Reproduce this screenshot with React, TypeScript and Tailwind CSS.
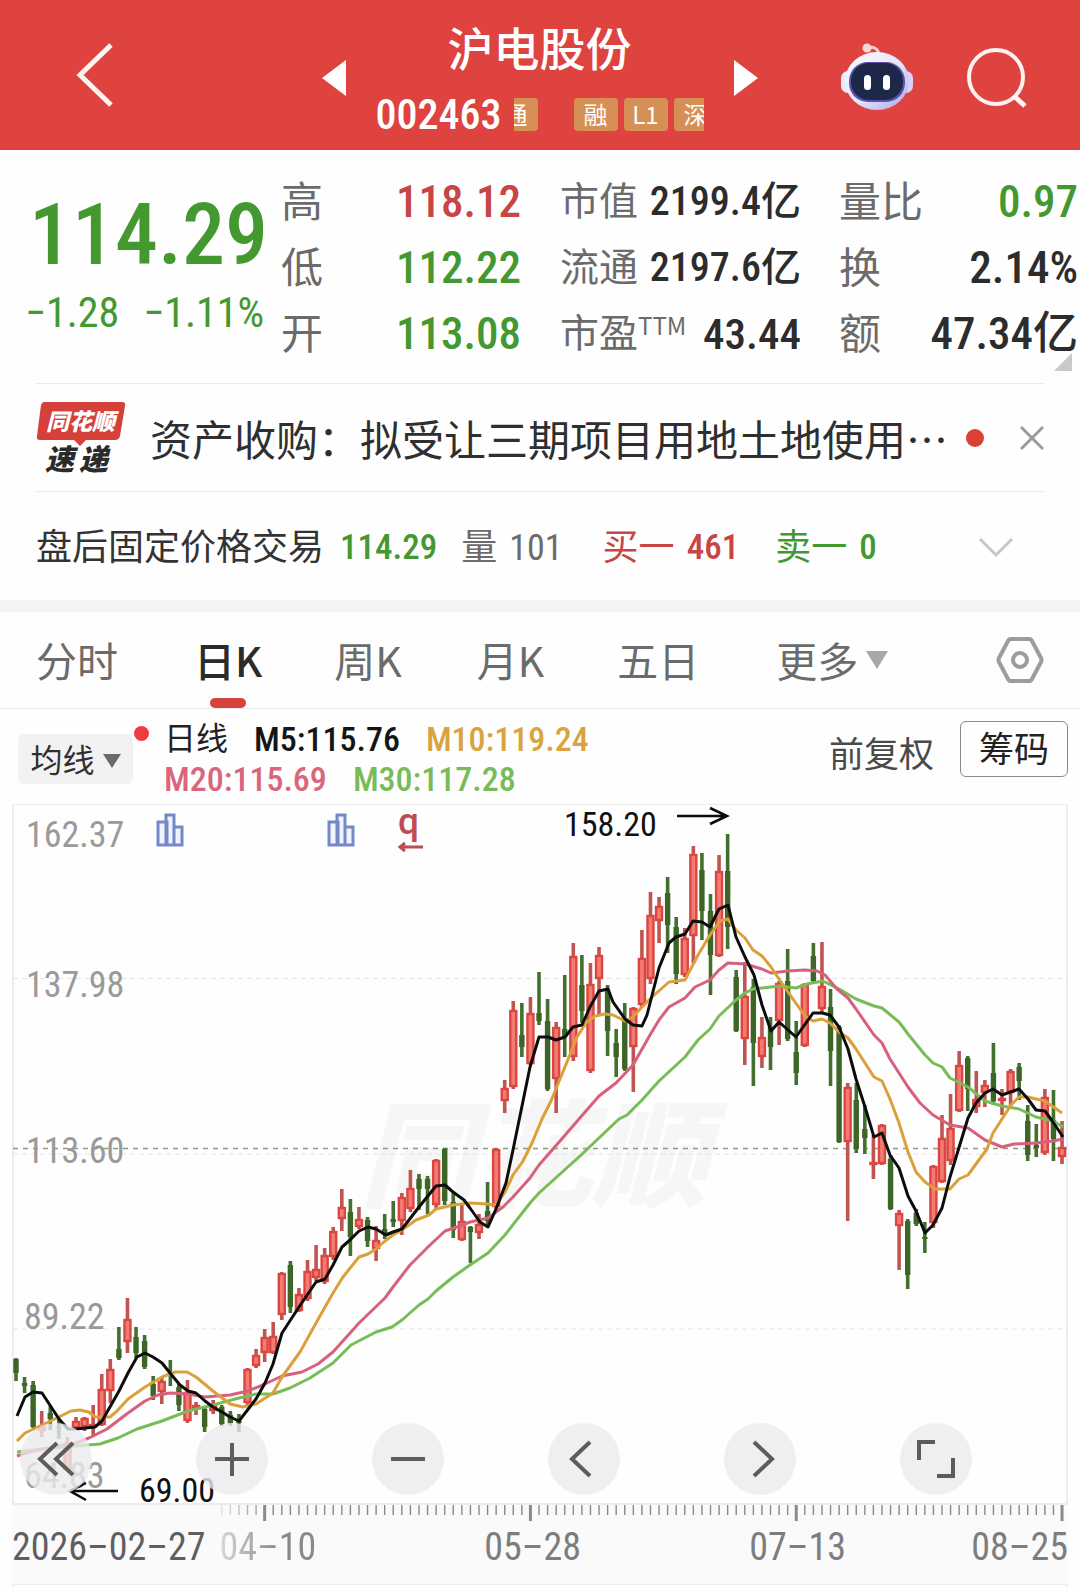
import { ReactNode } from "react";

type Candle = [kind: "r" | "g", high: number, top: number, bottom: number, low: number];

const candles: Candle[] = [
    ["g", 1358, 1359, 1373, 1381], ["g", 1377, 1383, 1386, 1393], ["g", 1381, 1385, 1427, 1428], ["r", 1411, 1426, 1431, 1437],
    ["g", 1406, 1413, 1419, 1430], ["g", 1419, 1427, 1428, 1439], ["r", 1437, 1443, 1470, 1471], ["r", 1417, 1421, 1428, 1429],
    ["r", 1417, 1418, 1427, 1431], ["r", 1405, 1424, 1426, 1435], ["r", 1374, 1389, 1425, 1426], ["r", 1359, 1369, 1391, 1403],
    ["g", 1327, 1349, 1358, 1360], ["r", 1298, 1319, 1342, 1353], ["g", 1327, 1337, 1353, 1358], ["g", 1335, 1341, 1367, 1369],
    ["g", 1376, 1384, 1396, 1400], ["r", 1377, 1381, 1392, 1404], ["g", 1360, 1373, 1375, 1386], ["g", 1384, 1387, 1405, 1411],
    ["r", 1380, 1392, 1421, 1423], ["r", 1402, 1405, 1409, 1415], ["g", 1407, 1409, 1427, 1432], ["r", 1400, 1404, 1411, 1414],
    ["g", 1405, 1407, 1424, 1426], ["g", 1411, 1415, 1423, 1426], ["g", 1414, 1421, 1423, 1432], ["r", 1368, 1369, 1403, 1406],
    ["r", 1349, 1355, 1366, 1368], ["r", 1329, 1337, 1353, 1362], ["r", 1322, 1336, 1353, 1354], ["r", 1272, 1273, 1315, 1320],
    ["g", 1261, 1265, 1307, 1313], ["r", 1288, 1294, 1311, 1312], ["r", 1260, 1271, 1299, 1301], ["r", 1245, 1269, 1278, 1281],
    ["r", 1248, 1255, 1282, 1284], ["r", 1227, 1231, 1257, 1260], ["r", 1189, 1207, 1219, 1231], ["g", 1199, 1212, 1237, 1256],
    ["r", 1207, 1219, 1227, 1229], ["g", 1217, 1220, 1241, 1247], ["r", 1226, 1240, 1249, 1261], ["g", 1214, 1229, 1235, 1239],
    ["g", 1201, 1219, 1222, 1227], ["r", 1193, 1197, 1221, 1235], ["r", 1170, 1188, 1209, 1212], ["g", 1174, 1179, 1189, 1210],
    ["g", 1176, 1179, 1189, 1214], ["r", 1159, 1160, 1205, 1209], ["g", 1148, 1149, 1201, 1205], ["g", 1193, 1202, 1230, 1238],
    ["r", 1205, 1221, 1240, 1241], ["g", 1226, 1227, 1232, 1263], ["r", 1214, 1224, 1233, 1239], ["g", 1182, 1211, 1221, 1225],
    ["r", 1148, 1149, 1207, 1209], ["r", 1080, 1088, 1101, 1113], ["r", 1001, 1010, 1087, 1089], ["g", 1003, 1035, 1047, 1057],
    ["r", 997, 1013, 1064, 1065], ["g", 972, 1013, 1021, 1025], ["g", 999, 1021, 1089, 1091], ["r", 1022, 1027, 1079, 1113],
    ["g", 975, 1029, 1037, 1057], ["r", 943, 956, 1057, 1061], ["g", 955, 985, 1011, 1023], ["r", 963, 984, 1071, 1073],
    ["r", 947, 955, 979, 1016], ["g", 985, 990, 1031, 1056], ["g", 1029, 1043, 1057, 1077], ["g", 1003, 1020, 1069, 1071],
    ["r", 1007, 1008, 1047, 1092], ["r", 930, 958, 1005, 1007], ["r", 892, 915, 979, 984], ["r", 897, 906, 921, 943],
    ["g", 877, 893, 925, 953], ["g", 917, 927, 974, 984], ["r", 928, 938, 975, 977], ["r", 846, 854, 936, 963],
    ["g", 853, 870, 911, 940], ["g", 894, 911, 955, 995], ["r", 855, 871, 956, 957], ["g", 834, 871, 927, 949],
    ["g", 970, 977, 1031, 1032], ["r", 962, 996, 1039, 1065], ["g", 979, 987, 1043, 1086], ["r", 1017, 1037, 1057, 1068],
    ["g", 1017, 1027, 1047, 1070], ["r", 981, 983, 1021, 1045], ["g", 949, 981, 1039, 1041], ["g", 1021, 1052, 1073, 1085],
    ["r", 983, 984, 1046, 1047], ["g", 943, 956, 981, 983], ["r", 942, 986, 1009, 1013], ["g", 989, 1007, 1051, 1086],
    ["g", 1025, 1027, 1142, 1143], ["r", 1083, 1087, 1142, 1221], ["g", 1083, 1100, 1149, 1153], ["g", 1105, 1129, 1138, 1154],
    ["r", 1135, 1162, 1165, 1179], ["r", 1124, 1125, 1164, 1165], ["g", 1155, 1159, 1209, 1210], ["r", 1210, 1213, 1226, 1270],
    ["g", 1219, 1221, 1275, 1289], ["g", 1209, 1213, 1224, 1226], ["g", 1222, 1237, 1239, 1253], ["r", 1165, 1166, 1223, 1228],
    ["r", 1115, 1138, 1182, 1183], ["r", 1094, 1128, 1161, 1165], ["r", 1051, 1065, 1111, 1112], ["g", 1056, 1058, 1089, 1111],
    ["r", 1071, 1099, 1107, 1113], ["r", 1080, 1085, 1093, 1107], ["g", 1043, 1073, 1101, 1105], ["r", 1089, 1098, 1101, 1115],
    ["r", 1069, 1071, 1093, 1105], ["g", 1063, 1067, 1081, 1100], ["g", 1105, 1121, 1155, 1161], ["g", 1124, 1145, 1148, 1157],
    ["r", 1089, 1097, 1153, 1155], ["g", 1090, 1120, 1139, 1161], ["r", 1121, 1147, 1157, 1164],
];

const averages = [
    {
        color: "#76bd58",
        points: "17,1452 42,1449 76,1446 100,1444 118,1438 137,1429 162,1421 188,1411 213,1405 239,1398 256,1394 273,1394 290,1388 310,1378 333,1363 351,1345 376,1332 392,1327 402,1320 419,1305 428,1299 436,1291 453,1277 470,1265 488,1253 505,1235 530,1203 539,1193 580,1156 619,1119 627,1115 642,1100 659,1081 685,1057 698,1040 710,1029 719,1016 736,1000 745,993 753,989 771,987 779,986 796,988 807,984 823,981 839,989 856,999 874,1006 882,1008 899,1022 908,1034 925,1055 933,1063 942,1067 950,1078 968,1087 985,1101 1002,1106 1019,1109 1036,1117 1053,1121 1063,1127",
    },
    {
        color: "#d7617d",
        points: "17,1456 33,1451 59,1446 76,1443 89,1438 107,1429 128,1413 145,1401 158,1395 170,1393 188,1394 205,1397 230,1395 248,1391 265,1384 282,1376 302,1372 318,1364 333,1352 351,1332 359,1323 385,1298 393,1287 410,1265 429,1246 445,1231 460,1226 470,1222 488,1218 503,1207 513,1197 530,1178 539,1165 560,1141 579,1119 599,1096 616,1083 633,1065 650,1035 659,1020 669,1007 685,998 695,987 710,980 719,970 728,963 745,964 762,969 771,973 788,971 805,970 817,971 825,975 837,989 848,998 856,1009 874,1035 882,1043 890,1059 908,1087 920,1103 933,1115 950,1125 968,1128 985,1140 1002,1147 1014,1144 1036,1143 1053,1141 1063,1139",
    },
    {
        color: "#dba03a",
        points: "17,1441 25,1433 42,1425 59,1417 71,1411 80,1410 89,1412 95,1417 110,1417 117,1411 128,1399 145,1387 162,1377 175,1372 187,1372 196,1377 213,1391 230,1404 243,1407 256,1404 273,1393 282,1377 300,1352 316,1323 333,1293 343,1277 359,1257 368,1254 376,1249 385,1241 393,1235 402,1230 416,1220 429,1215 436,1209 453,1205 470,1203 487,1204 496,1205 505,1192 513,1175 523,1161 532,1143 542,1119 551,1101 560,1079 569,1057 577,1037 586,1023 595,1016 605,1014 613,1015 625,1021 633,1017 642,1007 652,997 669,982 685,980 698,955 710,935 720,921 728,919 736,930 745,938 753,950 762,956 771,967 779,979 788,992 805,1016 813,1021 822,1019 830,1023 839,1032 848,1038 856,1049 865,1063 874,1077 882,1081 890,1099 899,1123 908,1152 916,1172 925,1182 935,1189 950,1189 959,1179 968,1175 976,1164 987,1149 993,1133 1011,1105 1019,1097 1028,1097 1036,1099 1045,1101 1062,1113",
    },
    {
        color: "#0d0d0d",
        points: "17,1416 25,1397 33,1392 42,1393 59,1419 68,1429 76,1429 95,1427 102,1421 119,1391 128,1373 137,1357 145,1353 153,1357 162,1363 170,1373 180,1385 188,1391 196,1393 205,1401 213,1407 222,1412 230,1417 239,1421 256,1399 265,1383 273,1364 282,1333 299,1307 316,1282 325,1279 333,1265 342,1247 350,1240 359,1231 368,1227 376,1229 386,1235 393,1232 402,1229 419,1207 436,1186 445,1185 453,1192 464,1200 470,1208 480,1222 488,1227 496,1209 506,1183 513,1150 530,1067 539,1037 548,1037 556,1040 565,1037 573,1027 582,1025 590,1007 599,991 608,989 613,1002 625,1019 633,1025 642,1026 647,1015 659,968 669,943 676,937 685,934 693,921 702,922 710,927 719,909 728,905 736,937 745,957 754,975 762,1005 771,1031 779,1022 796,1037 813,1013 822,1013 830,1015 839,1027 848,1049 856,1079 865,1107 874,1137 882,1133 890,1155 899,1168 908,1196 916,1211 925,1233 933,1225 942,1208 950,1177 968,1118 976,1103 985,1093 993,1089 1002,1095 1019,1089 1028,1099 1036,1110 1045,1111 1053,1122 1063,1137",
    },
];

// x of the n-th trading day on the chart
const dayX = (i: number) => 16 + i * 8.574;

function Tag({ children }: { children: ReactNode }) {
    return (
        <span className="flex h-[33px] w-11 shrink-0 items-center justify-center rounded-sm bg-[#d69055] font-[Noto_Sans_CJK_SC] text-2xl leading-8">
            {children}
        </span>
    );
}

function Header() {
    return (
        <header className="flex h-[150px] items-center bg-[#de4340] text-white">
            <div className="flex-1 pr-[6px] pl-[76px]">
                <button aria-label="返回" className="block">
                    <svg width="40" height="68" viewBox="0 0 40 68" fill="none" stroke="#fff4f0" strokeWidth="5">
                        <path d="M35 4 4 34l31 30" />
                    </svg>
                </button>
            </div>
            <div className="flex w-[436px] items-center justify-between pt-[6px]">
                <button aria-label="上一只">
                    <svg width="24" height="36" viewBox="0 0 24 36" fill="#fff"><path d="M24 0v36L0 18z" /></svg>
                </button>
                <div className="flex flex-col items-center pt-1">
                    <h1 className="text-[46px] leading-[68px] font-medium">沪电股份</h1>
                    <div className="flex h-[60px] items-center">
                        <span className="text-[42px] font-medium">002463</span>
                        <div className="ml-3 flex w-[190px] overflow-hidden">
                            <div className="mr-9 flex w-6 shrink-0 justify-end overflow-hidden"><Tag>通</Tag></div>
                            <div className="flex shrink-0 gap-[6px]">
                                <Tag>融</Tag>
                                <Tag>L1</Tag>
                                <Tag>深</Tag>
                            </div>
                        </div>
                    </div>
                </div>
                <button aria-label="下一只">
                    <svg width="24" height="36" viewBox="0 0 24 36" fill="#fff"><path d="M0 0v36l24-18z" /></svg>
                </button>
            </div>
            <div className="flex flex-1 items-center gap-[52px] pt-1 pl-[83px]">
                <button aria-label="智能助手">
                    <svg width="72" height="68" viewBox="0 0 72 68">
                        <defs>
                            <linearGradient id="shell" x1="0" y1="0" x2="1" y2="1">
                                <stop offset="0" stopColor="#ffffff" />
                                <stop offset="0.55" stopColor="#e3e2fa" />
                                <stop offset="1" stopColor="#a9a2ec" />
                            </linearGradient>
                        </defs>
                        <path d="M27 5c6-2 11 1 11 8" fill="none" stroke="#f6cfd2" strokeWidth="3" />
                        <circle cx="26" cy="5" r="4.500" fill="#f8d5d5" />
                        <rect x="0" y="28" width="14" height="22" rx="7" fill="#e9ecfb" />
                        <rect x="58" y="28" width="14" height="22" rx="7" fill="#d9d2f6" />
                        <ellipse cx="36" cy="38" rx="32" ry="29" fill="url(#shell)" />
                        <rect x="8" y="19" width="56" height="40" rx="19" fill="#5a50a8" />
                        <rect x="10" y="20" width="52" height="37" rx="18" fill="#1d2748" />
                        <rect x="23" y="32" width="7" height="15" rx="3.500" fill="#fff" />
                        <rect x="42" y="32" width="7" height="15" rx="3.500" fill="#fff" />
                    </svg>
                </button>
                <button aria-label="搜索">
                    <svg width="64" height="64" viewBox="0 0 64 64" fill="none" stroke="#fff1ee" strokeWidth="4">
                        <circle cx="31" cy="32" r="27" />
                        <path d="M49 51l11 10" strokeWidth="5" />
                    </svg>
                </button>
            </div>
        </header>
    );
}

type StatProps = { label: ReactNode; value: string; className: string };

function Stat({ label, value, className }: StatProps) {
    return (
        <div className="flex h-[66px] items-center justify-between whitespace-nowrap">
            <dt className="text-[#6b6b6b]">{label}</dt>
            <dd className={`font-medium ${className}`}>{value}</dd>
        </div>
    );
}

function Quote() {
    return (
        <section className="relative grid grid-cols-[281fr_279fr_279fr_241fr] pt-[19px] pb-4 text-[42px]">
            <div className="flex flex-col items-center pt-4 text-[#43982f]">
                <p className="ml-4 text-[86px] leading-[100px] font-medium">114.29</p>
                <p className="ml-2 flex gap-6 text-[42px] leading-[56px] whitespace-nowrap">
                    <span>−1.28</span>
                    <span>−1.11%</span>
                </p>
            </div>
            <dl className="pr-[39px]">
                <Stat label="高" value="118.12" className="text-[45px] text-[#c64545]" />
                <Stat label="低" value="112.22" className="text-[45px] text-[#43982f]" />
                <Stat label="开" value="113.08" className="text-[45px] text-[#43982f]" />
            </dl>
            <dl className="pr-[38px] text-[39px]">
                <Stat label="市值" value="2199.4亿" className="text-[40px] text-[#2c2c2c]" />
                <Stat label="流通" value="2197.6亿" className="text-[40px] text-[#2c2c2c]" />
                <Stat
                    label={<>市盈<sup className="font-[Noto_Sans_CJK_SC] text-2xl">TTM</sup></>}
                    value="43.44"
                    className="text-[43px] text-[#2c2c2c]"
                />
            </dl>
            <dl className="pr-[2px]">
                <Stat label="量比" value="0.97" className="text-[45px] text-[#43982f]" />
                <Stat label="换" value="2.14%" className="text-[45px] text-[#2c2c2c]" />
                <Stat label="额" value="47.34亿" className="text-[45px] text-[#2c2c2c]" />
            </dl>
            <svg className="absolute right-2 bottom-3" width="18" height="18" viewBox="0 0 18 18" fill="#c9c9c9">
                <path d="M18 0v18H0z" />
            </svg>
        </section>
    );
}

function News() {
    return (
        <section className="mx-9 flex h-[109px] items-center border-y border-[#ececec]">
            <svg width="90" height="80" viewBox="0 -2 90 80" className="shrink-0">
                <path d="M8 2h78q4 0 3 4l-5 30q-1 4-5 4H50l-6 6-6-6H4q-4 0-3-4L5 5q1-3 3-3z" fill="#d5413a" />
                <text x="10" y="30" className="fill-white text-[23px] font-black italic">同花顺</text>
                <text x="9" y="70" className="fill-[#2b2b2b] text-[29px] font-black italic">速</text>
                <text x="43" y="70" className="fill-[#2b2b2b] text-[29px] font-black italic">递</text>
            </svg>
            <a href="#news" className="ml-6 pt-1 text-[42px] whitespace-nowrap text-[#2f2f2f]">
                资产收购：拟受让三期项目用地土地使用<span className='font-["Noto_Sans_CJK_SC"]'>…</span>
            </a>
            <span className="ml-auto size-[18px] shrink-0 rounded-full bg-[#dc4034]" />
            <button aria-label="关闭" className="ml-9 shrink-0">
                <svg width="24" height="26" viewBox="0 0 24 26" fill="none" stroke="#9a9a9a" strokeWidth="3">
                    <path d="M1 2l22 22M23 2 1 24" />
                </svg>
            </button>
        </section>
    );
}

function AfterHours() {
    return (
        <section className="flex h-[108px] items-center pt-1 pr-[66px] pl-9 text-4xl whitespace-nowrap">
            <span className="text-[#333]">盘后固定价格交易</span>
            <span className="ml-4 text-[35px] font-medium text-[#43982f]">114.29</span>
            <span className="ml-6 text-[#6b6b6b]">量</span>
            <span className="ml-3 text-[#6b6b6b]">101</span>
            <span className="ml-10 text-[#c64545]">买一</span>
            <span className="ml-3 text-[35px] font-medium text-[#c64545]">461</span>
            <span className="ml-9 text-[#43982f]">卖一</span>
            <span className="ml-3 text-[35px] font-medium text-[#43982f]">0</span>
            <button aria-label="展开" className="ml-auto">
                <svg width="36" height="22" viewBox="0 0 36 22" fill="none" stroke="#c6c6c6" strokeWidth="3">
                    <path d="M2 2l16 16L34 2" />
                </svg>
            </button>
        </section>
    );
}

function Tabs() {
    return (
        <nav className="flex h-[97px] items-stretch border-b border-[#ececec] px-9 font-[Noto_Sans_CJK_SC] text-[41px] text-[#6b6b6b]">
            <button>分时</button>
            <button className="relative ml-[76px] font-medium text-[#2b2b2b]">
                日K
                <span className="absolute bottom-0 left-1/2 h-[10px] w-9 -translate-x-1/2 rounded-full bg-[#d4433b]" />
            </button>
            <button className="ml-[72px]">周K</button>
            <button className="ml-[75px]">月K</button>
            <button className="ml-[73px]">五日</button>
            <button className="ml-[77px] flex items-center gap-2">
                更多
                <svg width="22" height="18" viewBox="0 0 22 18" fill="#a8a8a8"><path d="M0 0h22L11 18z" /></svg>
            </button>
            <button aria-label="设置" className="ml-auto">
                <svg width="48" height="48" viewBox="0 0 48 48" fill="none" stroke="#9c9c9c" strokeWidth="4">
                    <path d="M15 3h18q2 0 3 2l9 17q1 2 0 4l-9 17q-1 2-3 2H15q-2 0-3-2L3 26q-1-2 0-4l9-17q1-2 3-2z" />
                    <circle cx="24" cy="24" r="7" />
                </svg>
            </button>
        </nav>
    );
}

function AverageBar() {
    return (
        <section className="flex h-[95px] items-center pr-3 pl-[18px] text-[32px] whitespace-nowrap">
            <button className="relative mt-1 flex h-[50px] w-[115px] items-center justify-center gap-2 rounded-md bg-[#f2f2f2] pt-1 text-[#2f2f2f]">
                均线
                <svg width="18" height="14" viewBox="0 0 18 14" fill="#6a6a6a"><path d="M0 0h18L9 14z" /></svg>
                <span className="absolute -top-2 -right-4 size-[15px] rounded-full bg-[#ee3b43]" />
            </button>
            <div className="ml-[31px] pt-1 text-[34px] leading-10 font-medium">
                <p className="flex gap-[26px]">
                    <span className="text-[32px] font-normal text-[#222]">日线</span>
                    <span className="text-[#151515]">M5:115.76</span>
                    <span className="text-[#d9a43e]">M10:119.24</span>
                </p>
                <p className="flex gap-[26px]">
                    <span className="text-[#d9667d]">M20:115.69</span>
                    <span className="text-[#78bb58]">M30:117.28</span>
                </p>
            </div>
            <button className="ml-auto text-[35px] text-[#4a4a4a]">前复权</button>
            <button className="mb-4 ml-[26px] h-14 w-[108px] rounded-md border border-[#8a8a8a] pt-1 text-[35px] leading-[48px] text-[#222]">
                筹码
            </button>
        </section>
    );
}

function Chart() {
    return (
        <svg viewBox="12 804 1056 701" className="block w-full">
            <rect x="13" y="804" width="1054" height="700" fill="#fefefe" stroke="#e6e6e6" strokeWidth="1.500" />
            <text x="360" y="1198" className="fill-[#f6f6f6] text-[116px] font-black italic">同花顺</text>
            <path d="M13 978.500H1067M13 1154H1067M13 1329H1067" stroke="#e4e4e4" strokeDasharray="5 4" />
            <path d="M13 1148.500H1067" stroke="#8d9a80" strokeWidth="1.500" strokeDasharray="5 5" />
            <g className="fill-[#9a9a9a] text-[36px]">
                <text x="26" y="847">162.37</text>
                <text x="26" y="997">137.98</text>
                <text x="26" y="1163">113.60</text>
                <text x="24" y="1329">89.22</text>
                <text x="24" y="1488">64.83</text>
            </g>

            {candles.map(([kind, high, top, bottom, low], i) => (
                <g key={i}>
                    <rect x={dayX(i) - 1.8} y={high} width="3.600" height={low - high} fill={kind === "r" ? "#bf5451" : "#44702f"} />
                    {kind === "r" ? (
                        <rect x={dayX(i) - 3} y={top + 1} width="6" height={Math.max(bottom - top - 2, 1)} fill="#f27c73" stroke="#dd4540" strokeWidth="2.400" />
                    ) : (
                        <rect x={dayX(i) - 2.700} y={top} width="5.400" height={bottom - top} fill="#3d6526" />
                    )}
                </g>
            ))}
            {averages.map((line) => (
                <polyline key={line.color} points={line.points} fill="none" stroke={line.color} strokeWidth="3" strokeLinejoin="round" />
            ))}

            {/* report and dividend marks */}
            {[157, 328].map((x) => (
                <path key={x} d={`M${x + 1} 822h9v23h-9zM${x + 9} 815h8v30h-8zM${x + 17} 827h8v18h-8z`} fill="#eef3ff" stroke="#7488c6" strokeWidth="3" />
            ))}
            <text x="398" y="834" className="fill-[#bd4c55] font-[Roboto] text-[37px] font-medium">q</text>
            <path d="M423 847H401M405 843l-5 4 5 4" fill="none" stroke="#bd4c55" strokeWidth="3" />

            <g className="fill-[#111] text-[34px]">
                <text x="564" y="836">158.20</text>
                <text x="139" y="1502">69.00</text>
            </g>
            <path d="M677 816h50M710 808l17 8-17 8M118 1491H70M86 1483l-16 8 16 9" fill="none" stroke="#0a0a0a" strokeWidth="2.500" />
        </svg>
    );
}

function RoundButton({ label, d }: { label: string; d: string }) {
    return (
        <button aria-label={label} className="size-[72px] rounded-full bg-[#ebebed]/80">
            <svg viewBox="0 0 72 72" fill="none" stroke="#5c5c5c" strokeWidth="4"><path d={d} /></svg>
        </button>
    );
}

function TimeAxis() {
    return (
        <footer className="mx-3 bg-[#fafafa] text-[38px] text-[#7d7d7d]">
            <svg viewBox="12 0 1056 18" className="block w-full">
                {candles.map((_, i) => {
                    if (i < 24) return null;
                    const major = (i - 29) % 31 === 0;
                    return (
                        <rect
                            key={i}
                            x={dayX(i) - (major ? 1.5 : 0.7)}
                            y="0"
                            width={major ? 3 : 1.4}
                            height={major ? 16 : 10}
                            fill="#8a8a8a"
                            opacity={i < 29 ? (i - 22) / 8 : 1}
                        />
                    );
                })}
            </svg>
            <div className="flex h-[61px] items-start leading-[48px]">
                <span className="text-[#5f5f5f]">2026–02–27</span>
                <span className="ml-[14px] bg-linear-to-r from-[#d8d8d8] to-[#8a8a8a] to-60% bg-clip-text text-transparent">04–10</span>
                <span className="ml-[168px]">05–28</span>
                <span className="ml-[168px]">07–13</span>
                <span className="ml-auto">08–25</span>
            </div>
        </footer>
    );
}

export default function App() {
    return (
        <main className={`min-h-screen bg-[#fefefe] font-[Roboto_Condensed,"Liberation_Sans_Narrow",Roboto,"Noto_Sans_CJK_SC",sans-serif]`}>
            <Header />
            <Quote />
            <News />
            <AfterHours />
            <div className="h-3 bg-[#f3f3f3]" />
            <Tabs />
            <AverageBar />
            <div className="relative mx-3">
                <Chart />
                <div className="absolute inset-x-2 bottom-[10px] flex justify-between pr-[88px]">
                    <RoundButton label="回到最早" d="M37 20 20 36l17 16M53 20 36 36l17 16" />
                    <RoundButton label="放大" d="M36 20v33M19 36h34" />
                    <RoundButton label="缩小" d="M19 36h34" />
                    <RoundButton label="向左" d="M42 19 24 36l18 17" />
                    <RoundButton label="向右" d="M30 19l18 17-18 17" />
                    <RoundButton label="全屏" d="M19 37V19h16M53 35v18H37" />
                </div>
            </div>
            <TimeAxis />
            <div className="mx-3 h-1 border border-b-0 border-[#ececec]" />
        </main>
    );
}
